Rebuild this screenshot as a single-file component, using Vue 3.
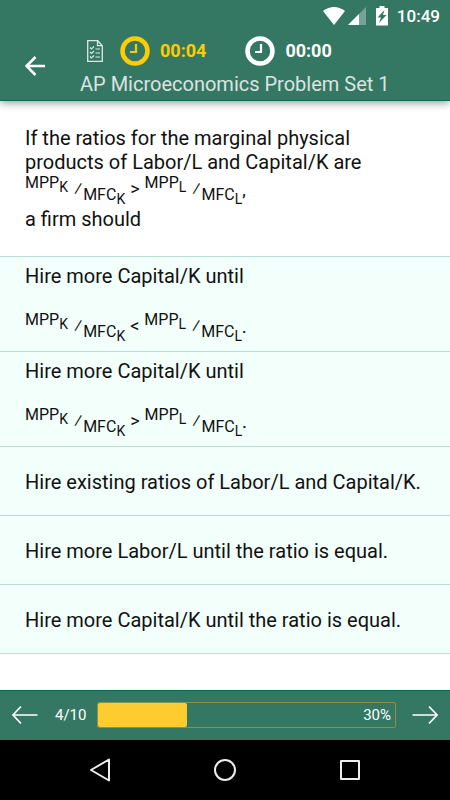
<script setup>
import { ref } from 'vue'

const progress = 30
const selected = ref(null)
const answers = [
  { text: 'Hire more Capital/K until', sign: '<' },
  { text: 'Hire more Capital/K until', sign: '>' },
  { text: 'Hire existing ratios of Labor/L and Capital/K.' },
  { text: 'Hire more Labor/L until the ratio is equal.' },
  { text: 'Hire more Capital/K until the ratio is equal.' },
]
</script>

<template>
  <div class="screen">
    <header class="top">
      <div class="status">
        <svg class="wifi" viewBox="0 0 24 20" aria-hidden="true"><path d="M1 5Q12-3 23 5L12 19Z" fill="#fff" /></svg>
        <svg class="signal" viewBox="0 0 18 18" aria-hidden="true">
          <path d="M18 0V18H0Z" fill="#fff" opacity=".32" />
          <path d="M11 7V18H0Z" fill="#fff" />
        </svg>
        <svg class="battery" viewBox="0 0 12 20" aria-hidden="true">
          <path d="M3.500 0h5v2H12v17.500H0V2h3.500Z" fill="#fff" />
          <path d="M8.500 4L1.500 11.500h3.500L3 17L10.500 9H7Z" fill="#347863" />
        </svg>
        <span class="time">10:49</span>
      </div>
      <div class="bar">
        <button class="icon-button back" type="button" aria-label="Back">
          <svg width="20" height="20" viewBox="0 0 20 20" fill="none" stroke="#fff" stroke-width="2.500"><path d="M20 10H2M10.500 1L1.500 10l9 9" /></svg>
        </button>
        <div class="heading">
          <div class="timers">
            <svg class="sheet" width="16" height="22" viewBox="0 0 16 22" fill="none" stroke="#dce8e3">
              <path d="M.7.7h10l4.600 5v15.600H.7ZM10.500.7v5h4.800" stroke-width="1.300" />
              <path d="M3 7.500l1.500 1.500L7 6.500M3 12l1.500 1.500L7 11M3 16.500L4.500 18L7 15.500M8.500 9H13M8.500 13H13M8.500 17H13" stroke-width="1.200" />
            </svg>
            <span class="timer gold">
              <svg width="30" height="30" viewBox="0 0 30 30" fill="none" stroke="currentColor"><circle cx="15" cy="15" r="12.500" stroke-width="4.500" /><path d="M16 8v8H10" stroke-width="2.200" /></svg>
              <span>00:04</span>
            </span>
            <span class="timer">
              <svg width="30" height="30" viewBox="0 0 30 30" fill="none" stroke="currentColor"><circle cx="15" cy="15" r="12.500" stroke-width="4.500" /><path d="M16 8v8H10" stroke-width="2.200" /></svg>
              <span>00:00</span>
            </span>
          </div>
          <h1>AP Microeconomics Problem Set 1</h1>
        </div>
      </div>
    </header>

    <main>
      <section class="question">
        <p>If the ratios for the marginal physical products of Labor/L and Capital/K are</p>
        <p class="formula">
          <span class="up">MPP<span class="index">K</span></span><span class="slash">⁄</span><span class="down">MFC<span class="index">K</span></span><span class="sign">&gt;</span><span class="up">MPP<span class="index">L</span></span><span class="slash">⁄</span><span class="down">MFC<span class="index">L</span></span><span class="stop">,</span>
        </p>
        <p>a firm should</p>
      </section>
      <div class="answers">
        <button
          v-for="(answer, i) in answers"
          :key="i"
          type="button"
          class="answer"
          :class="{ tall: answer.sign }"
          :aria-pressed="selected === i"
          @click="selected = i"
        >
          <span>{{ answer.text }}</span>
          <span v-if="answer.sign" class="formula">
            <span class="up">MPP<span class="index">K</span></span><span class="slash">⁄</span><span class="down">MFC<span class="index">K</span></span><span class="sign">{{ answer.sign }}</span><span class="up">MPP<span class="index">L</span></span><span class="slash">⁄</span><span class="down">MFC<span class="index">L</span></span><span class="stop">.</span>
          </span>
        </button>
      </div>
    </main>

    <footer class="pager">
      <button class="icon-button" type="button" aria-label="Previous question">
        <svg width="26" height="20" viewBox="0 0 26 20" fill="none" stroke="#fff" stroke-width="1.700"><path d="M25.500 10H1M9 1.500L1 10l8 8.500" /></svg>
      </button>
      <span class="count">4/10</span>
      <div class="progress" role="progressbar" :aria-valuenow="progress" aria-valuemin="0" aria-valuemax="100" aria-label="Progress">
        <div class="fill" :style="{ width: progress + '%' }"></div>
        <span>{{ progress }}%</span>
      </div>
      <button class="icon-button" type="button" aria-label="Next question">
        <svg width="26" height="20" viewBox="0 0 26 20" fill="none" stroke="#fff" stroke-width="1.700"><path d="M.5 10H25M17 1.500L25 10l-8 8.500" /></svg>
      </button>
    </footer>

    <nav class="system" aria-label="System">
      <button class="icon-button" type="button" aria-label="Back">
        <svg width="24" height="24" viewBox="0 0 24 24" fill="none" stroke="#eee" stroke-width="2" stroke-linejoin="round"><path d="M21 1.500v21L3 12Z" /></svg>
      </button>
      <button class="icon-button" type="button" aria-label="Home">
        <svg width="24" height="24" viewBox="0 0 24 24" fill="none" stroke="#eee" stroke-width="2"><circle cx="12" cy="12" r="10" /></svg>
      </button>
      <button class="icon-button" type="button" aria-label="Recent apps">
        <svg width="24" height="24" viewBox="0 0 24 24" fill="none" stroke="#eee" stroke-width="2" stroke-linejoin="round"><rect x="3" y="3" width="18" height="18" /></svg>
      </button>
    </nav>
  </div>
</template>

<style>
body {
  margin: 0;
  background: #fff;
}
</style>

<style scoped>
.screen {
  display: flex;
  flex-direction: column;
  min-height: 100vh;
  font-family: Roboto, sans-serif;
  font-size: 20px;
  line-height: 24px;
  color: #111;
}
.top {
  padding-bottom: 1px;
  background: #347863;
  border-bottom: 1px solid #066b50;
  box-shadow: 0 2px 8px rgba(0, 0, 0, 0.4);
  color: #fff;
}
.status {
  display: flex;
  justify-content: flex-end;
  align-items: center;
  height: 32px;
  padding-right: 10px;
}
.wifi {
  width: 24px;
  height: 20px;
}
.signal {
  width: 18px;
  height: 18px;
  margin: 0 10px 0 2px;
}
.battery {
  width: 12px;
  height: 20px;
  margin-right: 9px;
}
.time {
  font-size: 17px;
  font-weight: 500;
}
.bar {
  display: flex;
  align-items: center;
  padding-left: 25px;
}
.icon-button {
  display: flex;
  padding: 0;
  border: 0;
  background: none;
  cursor: pointer;
}
.heading {
  padding-left: 35px;
}
.timers {
  display: flex;
  align-items: center;
  height: 38px;
  padding-left: 7px;
}
.sheet {
  margin-right: 17px;
}
.timer {
  display: flex;
  align-items: center;
  gap: 10px;
  margin-right: 39px;
  font-size: 18px;
  font-weight: 700;
}
.gold {
  color: #fc0;
}
h1 {
  margin: 0;
  font-size: 20px;
  font-weight: 400;
  line-height: 29px;
  color: #dce3e0;
}
main {
  flex: 1;
}
.question {
  padding: 25px;
}
p {
  margin: 0;
}
.formula {
  display: flex;
  align-items: center;
  height: 30px;
  margin-bottom: 3px;
  font-size: 16px;
  line-height: 18px;
}
.up {
  padding-bottom: 12px;
}
.down {
  padding-top: 12px;
}
.index {
  font-size: 14px;
  line-height: 0;
  vertical-align: -4px;
}
.slash {
  padding: 0 1px 0 6px;
  font-size: 18px;
}
.sign {
  padding: 0 5px;
  font-size: 18px;
}
.stop {
  padding-top: 4px;
  font-weight: 500;
}
.answers {
  border-bottom: 1px solid #b5e2d3;
  background: #f2fffb;
}
.answer {
  display: flex;
  flex-direction: column;
  justify-content: center;
  box-sizing: border-box;
  width: 100%;
  min-height: 69px;
  padding: 2px 25px 0;
  border: 0;
  border-top: 1px solid #b5e2d3;
  background: none;
  font: inherit;
  color: inherit;
  text-align: left;
  cursor: pointer;
}
.tall {
  justify-content: flex-start;
  gap: 23px;
  min-height: 95px;
  padding-top: 7px;
}
.pager {
  display: flex;
  align-items: center;
  box-sizing: border-box;
  height: 50px;
  padding: 0 12px 1px;
  border-top: 1px solid #066b50;
  background: #347863;
  color: #fff;
  font-size: 15px;
}
.count {
  margin: 0 11px 0 17px;
}
.progress {
  position: relative;
  display: flex;
  flex: 1;
  align-items: center;
  justify-content: flex-end;
  height: 24px;
  margin-right: 16px;
  padding-right: 4px;
  border: 1px solid #8b904e;
  border-radius: 2px;
}
.fill {
  position: absolute;
  top: 0;
  bottom: 0;
  left: 0;
  border-radius: 2px;
  background: #ffcc2f;
}
.system {
  display: flex;
  align-items: center;
  justify-content: center;
  gap: 101px;
  height: 60px;
  background: #000;
}
</style>
